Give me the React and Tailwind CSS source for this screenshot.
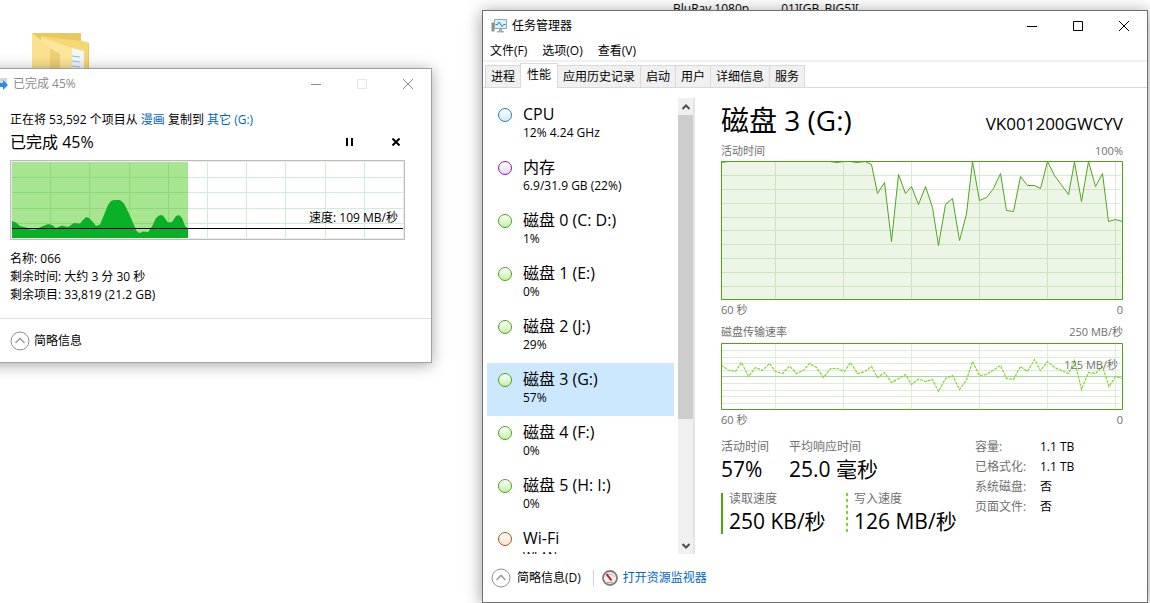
import { useState } from 'react'

const TABS = ['进程', '性能', '应用历史记录', '启动', '用户', '详细信息', '服务']

const DEVICES = [
  { name: 'CPU', info: '12% 4.24 GHz', kind: 'cpu' },
  { name: '内存', info: '6.9/31.9 GB (22%)', kind: 'memory' },
  { name: '磁盘 0 (C: D:)', info: '1%', kind: 'disk' },
  { name: '磁盘 1 (E:)', info: '0%', kind: 'disk' },
  { name: '磁盘 2 (J:)', info: '29%', kind: 'disk' },
  { name: '磁盘 3 (G:)', info: '57%', kind: 'disk' },
  { name: '磁盘 4 (F:)', info: '0%', kind: 'disk' },
  { name: '磁盘 5 (H: I:)', info: '0%', kind: 'disk' },
  { name: 'Wi-Fi', info: 'WLAN', kind: 'wifi' },
]

const DOTS = {
  cpu: 'border-[#1f7fb8] to-[#d3e8f5]',
  memory: 'border-[#8a1fa8] to-[#ecd6f5]',
  disk: 'border-[#4ca31a] to-[#c4f0a4]',
  wifi: 'border-[#a85518] to-[#f8dfcb]',
}

const DETAILS = [
  ['容量:', '1.1 TB'],
  ['已格式化:', '1.1 TB'],
  ['系统磁盘:', '否'],
  ['页面文件:', '否'],
]

const GRID_X = [54.5, 122.5, 190.5, 258.5, 326.5, 394.5]

const ACTIVITY =
  '0,1.5 7,.5 109,.5 116,1.5 123,.5 129,.5 136,1.5 144,.5 150.5,3.5 156.5,32.5 163.5,21.5 170.5,80.5 177.5,13.5 184.5,32.5 190.5,25.5 197.5,43.5 204.5,25.5 211.5,46.5 217.5,84.5 224.5,43.5 231.5,37.5 238.5,79.5 245.5,53 251.5,.5 258.5,39.5 265.5,36.5 272.5,27.5 279.5,12.5 285.5,49.5 292.5,50.5 299.5,15.5 306.5,24.5 313.5,24.5 319.5,27.5 326.5,.5 333.5,14.5 347.5,33.5 353.5,1 360.5,40.5 367.5,.5 374.5,25.5 381.5,12.5 387.5,60.5 394.5,58.5 401.5,60.5'

const TRANSFER =
  '0,22 7,27 14.5,28.5 20.5,19.5 27.5,33.5 34.5,24.5 41.5,27.5 48.5,20.5 54.5,28.5 61.5,30.5 68.5,23 75.5,30.5 82.5,27.5 88.5,20.5 95.5,24.5 102.5,34.5 109.5,25.5 116.5,25.5 123.5,28.5 129.5,19.5 136.5,30.5 144,28.5 150.5,23.5 156.5,34.5 163.5,29.5 170.5,39.5 177.5,35.5 184.5,31.5 190.5,41.5 197.5,36 204.5,38.5 211.5,36.5 217.5,48.5 224.5,35.5 231.5,32.5 238.5,46.5 245.5,37 251.5,18.5 258.5,32.5 265.5,31.5 279.5,22.5 285.5,35.5 292.5,36.5 299.5,23.5 306.5,28.5 313.5,16.5 319.5,27.5 326.5,18.5 333.5,24.5 347.5,30.5 353.5,17.5 360.5,46.5 367.5,29.5 374.5,30.5 381.5,23.5 388,43.5 394.5,33.5 401.5,35.5'

function WindowButtons({ maxDisabled }) {
  return (
    <div className="ml-auto flex">
      <button aria-label="最小化" className="flex h-[30px] w-[46px] items-center justify-center">
        <svg width="10" height="10" stroke="currentColor"><path d="M0 5.5h10" /></svg>
      </button>
      <button aria-label="最大化" disabled={maxDisabled}
        className="flex h-[30px] w-[46px] items-center justify-center disabled:text-[#e6e6e6]">
        <svg width="10" height="10" fill="none" stroke="currentColor"><path d="M.5 .5h9v9h-9z" /></svg>
      </button>
      <button aria-label="关闭" className="flex h-[30px] w-[46px] items-center justify-center">
        <svg width="10" height="10" stroke="currentColor"><path d="M0 0L10 10M10 0L0 10" /></svg>
      </button>
    </div>
  )
}

function CollapseIcon() {
  return (
    <svg width="20" height="20" viewBox="0 0 20 20" fill="none">
      <circle cx="10" cy="10" r="9" stroke="#909090" />
      <path d="M5.5 12L10 7.5l4.5 4.5" stroke="#a0a0a0" strokeWidth="1.6" />
    </svg>
  )
}

function Folder() {
  return (
    <svg className="absolute top-8 left-8" width="58" height="60" viewBox="0 0 58 60">
      <path d="M0 1h49v8l8 2v49H0z" fill="#e9c862" />
      <path d="M9 4l39 5 8 1v50H40z" fill="#f7d774" />
      <path d="M40 16l12 3v41H40z" fill="#f4f7fa" />
      <path d="M40 24l8 1M40 29l8 1M40 34l8 1" stroke="#8fc0ea" />
      <path d="M9 5l31 11v44H9z" fill="#fde59c" />
      <path d="M0 1l18 15v44H0z" fill="#fbe08d" />
      <path d="M18 16l10 6v38H18z" fill="#efcf75" />
    </svg>
  )
}

function CopyGraph() {
  return (
    <svg className="block" width="395" height="80" viewBox="0 0 395 80" role="img" aria-label="复制速度">
      <path d="M.5 .5h394v79H.5z" fill="#fff" stroke="#bcbcbc" />
      <path d="M1.5 1.5h392v77h-392z" fill="none" stroke="#ececec" />
      <path d="M2 2h176v76H2z" fill="#a8e590" />
      <path d="M2 17.5h176M2 32.5h176M2 48.5h176M2 63.5h176M40.5 2v76M79.5 2v76M119.5 2v76M158.5 2v76" stroke="#8cdb7b" />
      <path d="M178 17.5h215M178 32.5h215M178 48.5h215M178 63.5h215M197.5 2v76M236.5 2v76M275.5 2v76M315.5 2v76M354.5 2v76" stroke="#cdeed6" />
      <path d="M2 78V61L6 62.5 10 66 16 67.5 20 69.5 25 69.5 32 66.5 38 64 42 65 46 68 52 65.5 58 67 64 63 70 63.5 73 60 76 57 79 58 82 61 86 66 90 64.5 94 55 98 45 101 41 104 40H110L114 43.5 118 51.5 124 65 126 70 128 72.5 130 73 133 71.5 138 72 142 66.5 146 58 149 55.5 152 55 154 57 158 62.5 162 62 166 56 169 55 172 58 175 66 178 68.5V78z" fill="#08b025" />
      <path d="M2 68.5h391" stroke="#000" />
    </svg>
  )
}

function CopyWindow() {
  return (
    <section className="absolute top-[68px] -left-6 w-[456px] border border-[#a0a0a0] bg-white shadow-[0_2px_14px_rgba(0,0,0,0.35)]">
      <header className="flex h-[30px] items-center pl-[23px] text-[#8c8c8c]">
        <svg width="9" height="16" viewBox="0 0 9 16">
          <path d="M0 2h7v6H0z" fill="#d8d8d8" />
          <path d="M0 7h3V4l5 5-5 5v-3H0z" fill="#2b8ede" />
        </svg>
        <h2 className="ml-1">已完成 45%</h2>
        <WindowButtons maxDisabled />
      </header>
      <div className="pt-[13px] pr-[26px] pl-[33px]">
        <p className="leading-4">
          正在将 53,592 个项目从 <a href="#src" className="text-[#0066cc]">漫画</a> 复制到 <a href="#dst" className="text-[#0066cc]">其它 (G:)</a>
        </p>
        <div className="flex h-7 items-center">
          <p className="text-base">已完成 45%</p>
          <button aria-label="暂停" className="mr-[38px] ml-auto">
            <svg width="8" height="8"><path d="M0 0h2v8H0zM5 0h2v8H5z" /></svg>
          </button>
          <button aria-label="取消" className="mr-[5px]">
            <svg width="8" height="8" stroke="#000" strokeWidth="2"><path d="M.5 .5l7 7M7.5 .5l-7 7" /></svg>
          </button>
        </div>
        <div className="relative mt-1">
          <CopyGraph />
          <p className="absolute right-[7px] bottom-[14px] leading-4">速度: 109 MB/秒</p>
        </div>
        <div className="mt-[10px] mb-[14px] leading-[18px]">
          <p>名称: 066</p>
          <p>剩余时间: 大约 3 分 30 秒</p>
          <p>剩余项目: 33,819 (21.2 GB)</p>
        </div>
      </div>
      <footer className="flex h-11 items-center border-t border-[#dfdfdf] pl-[33px]">
        <button className="flex items-center gap-1">
          <CollapseIcon />简略信息
        </button>
      </footer>
    </section>
  )
}

function TaskIcon() {
  return (
    <svg width="16" height="16" viewBox="0 0 16 16">
      <path d="M.5 4.5h3v9h-3z" fill="#8b9094" />
      <path d="M1 6h1v2H1z" fill="#3fc15a" />
      <path d="M3.5 1.5h12v9h-12z" fill="#d6effa" stroke="#9ba3a8" />
      <path d="M4.5 6.5h2l1.5-2.5 3 4.500 1.500-2h2" fill="none" stroke="#1d8cc4" />
      <path d="M8 11h3v2h2v1.500H6V13h2z" fill="#a6abae" />
    </svg>
  )
}

function GaugeIcon() {
  return (
    <svg width="16" height="16" viewBox="0 0 16 16">
      <circle cx="8" cy="8" r="7" fill="#f4f1ef" stroke="#807c7a" strokeWidth="1.8" />
      <path d="M3.5 7a5 5 0 0 1 9 0" fill="none" stroke="#b9b4b1" />
      <path d="M4.500 4l5 6.500" stroke="#c8171e" strokeWidth="2" />
      <path d="M5 12.500h6" stroke="#a9a4a1" />
    </svg>
  )
}

function ActivityChart() {
  return (
    <svg className="block h-[139px] w-full" viewBox="0 0 402 139" preserveAspectRatio="none" role="img" aria-label="活动时间">
      <g stroke="#d9ecd0">
        {[14.5, 28.5, 42.5, 56.5, 69.5, 83.5, 97.5, 111.5, 125.5].map(y => <path key={y} d={`M0 ${y}H400`} />)}
        {GRID_X.map(x => <path key={x} d={`M${x} 0V139`} />)}
      </g>
      <polygon points={`0,139 ${ACTIVITY} 402,139`} fill="#4da60c" fillOpacity="0.1" />
      <polyline points={ACTIVITY} fill="none" stroke="#4da61c" />
      <path d="M.5 .5h401v138H.5z" fill="none" stroke="#4da60c" />
    </svg>
  )
}

function TransferChart() {
  return (
    <svg className="block h-[67px] w-full" viewBox="0 0 402 67" preserveAspectRatio="none" role="img" aria-label="磁盘传输速率">
      <g stroke="#dcefd2">
        {[7.5, 14.5, 20.5, 27.5, 40.5, 47.5, 53.5, 60.5].map(y => <path key={y} d={`M0 ${y}H400`} />)}
        {GRID_X.map(x => <path key={x} d={`M${x} 0V67`} />)}
      </g>
      <path d="M0 33.5H401" stroke="#a3dba0" />
      <polyline points={TRANSFER} fill="none" stroke="#83d62f" strokeWidth="1.2" strokeDasharray="3 1" />
      <path d="M.5 .5h401v66H.5z" fill="none" stroke="#4da60c" />
    </svg>
  )
}

function Stat({ label, value }) {
  return (
    <div>
      <dt className="leading-3 text-[#707070]">{label}</dt>
      <dd className="text-[21px] leading-8">{value}</dd>
    </div>
  )
}

function DeviceList({ selected, onSelect }) {
  return (
    <ul className="h-[456px] w-[187px] overflow-hidden">
      {DEVICES.map((d, i) => (
        <li key={d.name}>
          <button onClick={() => onSelect(i)}
            className={`flex h-[53px] w-full items-start gap-[11px] pt-[6px] pl-[11px] text-left ${i === selected ? 'bg-[#cce8ff]' : ''}`}>
            <span className={`mt-1 size-[14px] rounded-full border bg-linear-to-b from-white ${DOTS[d.kind]}`} />
            <span>
              <span className="block text-base leading-5">{d.name}</span>
              <span className="block leading-[18px]">{d.info}</span>
            </span>
          </button>
        </li>
      ))}
    </ul>
  )
}

function Scrollbar() {
  return (
    <div className="ml-1 flex w-[17px] flex-col border-r-2 border-[#e4e4e4] bg-[#f0f0f0]">
      <button aria-label="向上滚动" className="flex h-[17px] items-center justify-center">
        <svg width="8" height="6" fill="none" stroke="#505050" strokeWidth="2"><path d="M.5 5L4 1.5 7.5 5" /></svg>
      </button>
      <div className="h-[304px] bg-[#cdcdcd]" />
      <button aria-label="向下滚动" className="mt-auto flex h-[17px] items-center justify-center">
        <svg width="8" height="6" fill="none" stroke="#505050" strokeWidth="2"><path d="M.5 1L4 4.5 7.5 1" /></svg>
      </button>
    </div>
  )
}

function DiskPanel() {
  return (
    <main className="flex-1 pt-[3px] pr-6 pl-[26px]">
      <div className="flex h-10 items-center justify-between">
        <h1 className="text-[28px]">磁盘 3 (G:)</h1>
        <p className="pt-[6px] text-[17px]">VK001200GWCYV</p>
      </div>
      <div className="flex h-5 items-center justify-between text-[11px] text-[#707070]">
        <span>活动时间</span><span>100%</span>
      </div>
      <ActivityChart />
      <div className="flex h-5 items-center justify-between text-[11px] text-[#707070]">
        <span>60 秒</span><span>0</span>
      </div>
      <div className="mt-[2px] flex h-5 items-center justify-between text-[11px] text-[#707070]">
        <span>磁盘传输速率</span><span>250 MB/秒</span>
      </div>
      <div className="relative mt-px">
        <TransferChart />
        <span className="absolute top-[14px] right-[5px] text-[11px] leading-4 text-[#707070]">125 MB/秒</span>
      </div>
      <div className="flex h-5 items-center justify-between text-[11px] text-[#707070]">
        <span>60 秒</span><span>0</span>
      </div>
      <div className="mt-[7px] flex">
        <div className="w-[254px] pt-1">
          <dl className="flex gap-5">
            <Stat label="活动时间" value="57%" />
            <Stat label="平均响应时间" value="25.0 毫秒" />
          </dl>
          <dl className="mt-2 flex whitespace-nowrap">
            <div className="h-[41px] w-[125px] border-l-2 border-[#4da60c] pl-[6px]">
              <Stat label="读取速度" value="250 KB/秒" />
            </div>
            <div className="flex h-[41px] gap-[6px]">
              <svg width="2" height="39"><path d="M1 0v39" stroke="#7cd81a" strokeWidth="2" strokeDasharray="3 3" /></svg>
              <Stat label="写入速度" value="126 MB/秒" />
            </div>
          </dl>
        </div>
        <dl className="grid grid-cols-[65px_auto] content-start leading-5">
          {DETAILS.map(([label, value]) => (
            <div key={label} className="contents">
              <dt className="text-[#707070]">{label}</dt>
              <dd>{value}</dd>
            </div>
          ))}
        </dl>
      </div>
    </main>
  )
}

function TaskManager() {
  const [tab, setTab] = useState(1)
  const [device, setDevice] = useState(5)

  return (
    <section className="absolute top-[10px] right-[2px] left-[482px] border border-[#6f6f6f] bg-white shadow-[0_2px_16px_rgba(0,0,0,0.4)]">
      <header className="flex h-[30px] items-center pl-2">
        <TaskIcon />
        <h2 className="ml-[5px]">任务管理器</h2>
        <WindowButtons />
      </header>
      <nav className="flex h-[21px] gap-[15px] border-b-2 border-[#f0f0f0] pl-[7px] leading-[19px]">
        <button>文件(F)</button>
        <button>选项(O)</button>
        <button>查看(V)</button>
      </nav>
      <div role="tablist" className="flex h-[26px] items-end border-b border-[#d9d9d9] pl-[2px]">
        {TABS.map((t, i) => (
          <button key={t} role="tab" aria-selected={i === tab} onClick={() => setTab(i)}
            className={i === tab
              ? '-mb-px -ml-px h-[25px] border border-b-0 border-[#d9d9d9] bg-white px-[6px] pb-[2px]'
              : 'h-[22px] border-t border-r border-[#d9d9d9] bg-[#f0f0f0] px-[5px] first:border-l'}>
            {t}
          </button>
        ))}
      </div>
      <div className="flex pt-[10px] pl-1">
        <DeviceList selected={device} onSelect={setDevice} />
        <Scrollbar />
        <DiskPanel />
      </div>
      <footer className="flex h-12 items-center pl-2">
        <button className="flex items-center gap-[6px]">
          <CollapseIcon />简略信息(D)
        </button>
        <a href="#resmon" className="ml-3 flex items-center gap-[5px] border-l border-[#d0d0d0] pl-2 leading-4 text-[#0066cc]">
          <GaugeIcon />打开资源监视器
        </a>
      </footer>
    </section>
  )
}

export default function App() {
  return (
    <div className="relative min-h-screen overflow-hidden bg-white font-['Open_Sans','Noto_Sans_CJK_SC',sans-serif] text-xs text-black">
      <Folder />
      <div className="absolute top-0 left-[673px] flex gap-8 leading-[18px]">
        <span>BluRay 1080p</span>
        <span>01][GB_BIG5][</span>
      </div>
      <CopyWindow />
      <TaskManager />
    </div>
  )
}
